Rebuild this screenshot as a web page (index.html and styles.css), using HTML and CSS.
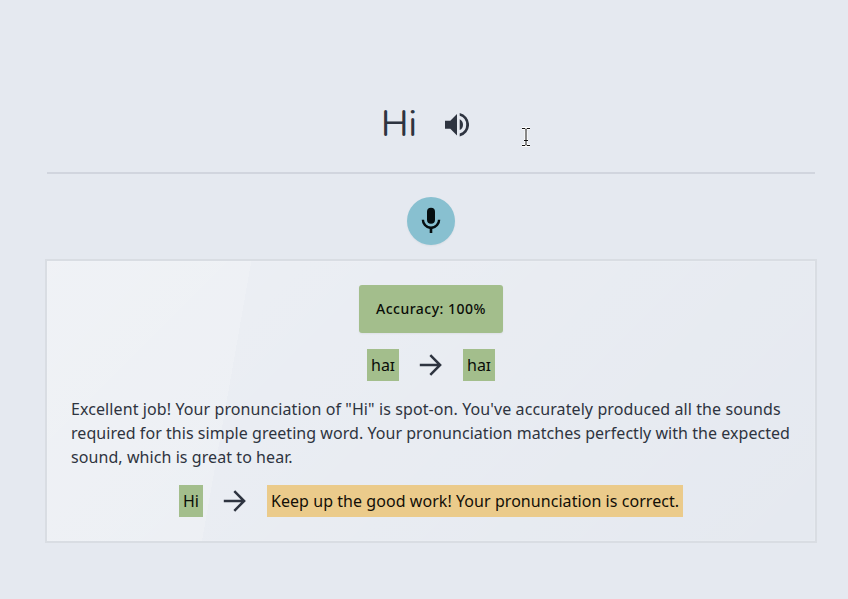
FILE: index.html
```html
<!DOCTYPE html>
<html lang="en">
<head>
<meta charset="utf-8">
<title>Pronunciation practice</title>
<link rel="stylesheet" href="styles.css">
</head>
<body>
<main class="practice">
  <header class="prompt">
    <h1 class="word">Hi</h1>
    <svg class="icon speaker" viewBox="0 0 24 24"><path d="M0 7.7v8h5.3L12 22.4V1L5.3 7.7zM18 11.7a6 6 0 0 0-3.3-5.4v10.8a6 6 0 0 0 3.3-5.4M14.7 0v2.8a9.35 9.35 0 0 1 0 17.8v2.8a12 12 0 0 0 0-23.4"/></svg>
  </header>
  <hr class="divider">
  <button class="mic" aria-label="Record">
    <svg class="icon" viewBox="0 0 32 32"><path d="M16 18.700a4 4 0 0 0 4-4v-8a4 4 0 0 0-8 0v8a4 4 0 0 0 4 4m6.900-4a6.900 6.900 0 0 1-13.800 0H6.700a9.300 9.300 0 0 0 8 9.200V28h2.600v-4.100a9.300 9.300 0 0 0 8-9.200z"/></svg>
  </button>
  <section class="card">
    <div class="accuracy"><span>Accuracy: 100%</span></div>
    <div class="compare">
      <span class="chip good sound">haɪ</span>
      <svg class="icon arrow" viewBox="0 0 24 24"><path d="M.8 12h20M11.300 2.200l9.800 9.800-9.800 9.800"/></svg>
      <span class="chip good sound">haɪ</span>
    </div>
    <p class="feedback">
      <span class="line line-a">Excellent job! Your pronunciation of "Hi" is spot-on. You've accurately produced all the sounds</span>
      <span class="line line-b">required for this simple greeting word. Your pronunciation matches perfectly with the expected</span>
      <span class="line line-c">sound, which is great to hear.</span>
    </p>
    <div class="compare">
      <span class="chip good heard">Hi</span>
      <svg class="icon arrow" viewBox="0 0 24 24"><path d="M.8 12h20M11.300 2.200l9.800 9.800-9.800 9.800"/></svg>
      <span class="chip tip"><span class="tip-text">Keep up the good work! Your pronunciation is correct.</span></span>
    </div>
  </section>
</main>
<svg class="cursor" viewBox="0 0 12 22"><path class="halo" d="M2 2.500h3l1 1 1-1h3M2 19.500h3l1-1 1 1h3M6 3.500v15M4 14.500h4"/><path class="beam" d="M2 2.500h3l1 1 1-1h3M2 19.500h3l1-1 1 1h3M6 3.500v15M4 14.500h4"/></svg>
</body>
</html>
```
FILE: styles.css
```css
* { box-sizing: border-box; }
body {
  margin: 0;
  min-height: 599px;
  overflow: hidden;
  background: #e5e9f0;
  color: #2e3440;
  font: 16px/24px "Noto Sans", sans-serif;
}
.practice {
  width: 768px;
  margin-left: 47px;
  padding-top: 101px;
  display: flex;
  flex-direction: column;
  align-items: center;
}
.icon { display: block; flex: none; fill: currentColor; }
.prompt {
  height: 48px;
  display: flex;
  align-items: center;
  gap: 28px;
  padding-right: 12px;
}
.word {
  margin: 0;
  width: 36px;
  font: 400 36px/40px Nunito, "Noto Sans", sans-serif;
  white-space: nowrap;
}
.speaker { width: 24px; height: 24px; }
.divider {
  width: 100%;
  height: 2px;
  margin: 23px 0;
  border: 0;
  background: #d1d5de;
}
.mic {
  width: 48px;
  height: 48px;
  padding: 0;
  border: 0;
  border-radius: 50%;
  display: grid;
  place-items: center;
  background: #88c0d0;
  color: #060e10;
  box-shadow: 0 1px 2px rgb(0 0 0 / 5%);
}
.mic .icon { width: 32px; height: 32px; }
.card {
  width: 100%;
  height: 280px;
  margin-top: 16px;
  padding: 24px;
  display: flex;
  flex-direction: column;
  align-items: center;
  gap: 16px;
  background-image:
    linear-gradient(135deg, rgb(255 255 255 / 30%), transparent),
    linear-gradient(100deg, rgb(255 255 255 / 16%) 25%, transparent 25%);
  box-shadow: inset 0 0 0 1px rgb(255 255 255 / 10%), 0 0 0 2px rgb(0 0 0 / 5%);
}
.accuracy {
  width: 144px;
  height: 48px;
  display: grid;
  place-items: center;
  border-radius: 3px;
  background: #a3be8c;
  color: #0a0d08;
  font-size: 14px;
  font-weight: 500;
  letter-spacing: .5px;
  white-space: nowrap;
  box-shadow: 0 1px 2px rgb(0 0 0 / 5%);
}
.compare { display: flex; align-items: center; gap: 20px; }
.chip {
  height: 32px;
  padding: 4px;
  white-space: nowrap;
  color: #0a0d08;
}
.good { background: #a3be8c; }
.sound { width: 32px; }
.heard { width: 24px; }
.tip { width: 416px; background: #ebcb8b; color: #130f07; }
.tip-text { letter-spacing: .055px; }
.arrow { width: 24px; height: 24px; fill: none; stroke: currentColor; stroke-width: 2.5; }
.feedback { width: 720px; margin: 0; }
.line { display: block; width: max-content; white-space: nowrap; }
.line-a { letter-spacing: .095px; }
.line-b { letter-spacing: .042px; }
.line-c { letter-spacing: .07px; }
.cursor {
  position: absolute;
  left: 520px;
  top: 126px;
  width: 12px;
  height: 22px;
  fill: none;
}
.halo { stroke: #fff; stroke-width: 3; }
.beam { stroke: #111; stroke-width: 1; }
```
